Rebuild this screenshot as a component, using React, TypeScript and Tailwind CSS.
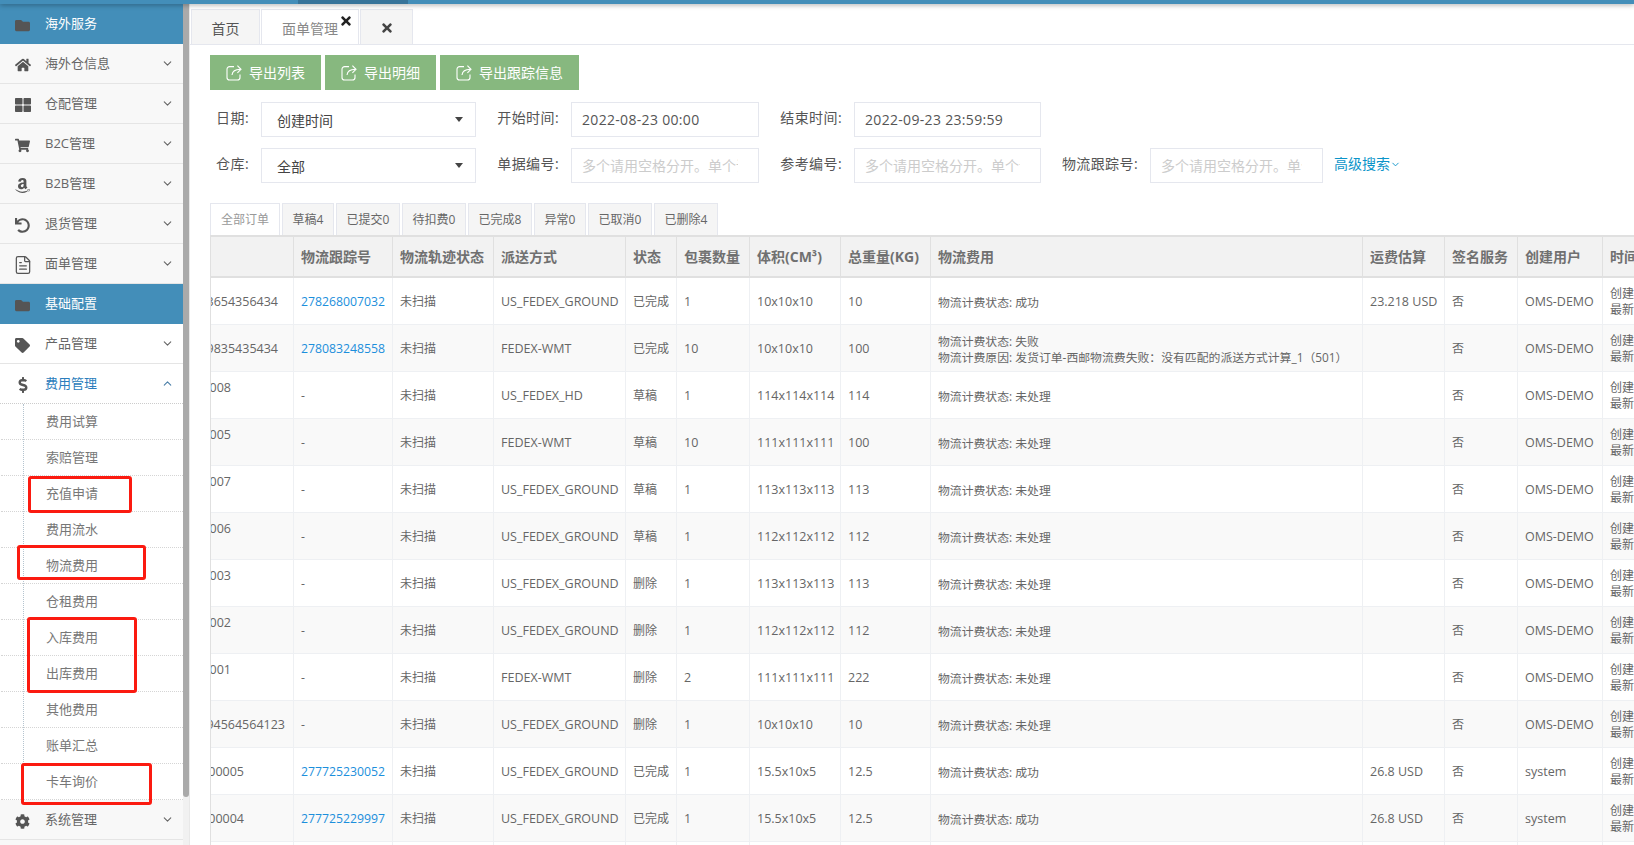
import React from "react";
import {
  FaFolder, FaHome, FaThLarge, FaShoppingCart, FaAmazon, FaUndo, FaTag,
  FaDollarSign, FaCog, FaTimes,
} from "react-icons/fa";
import { ChevronDown, ChevronUp, FileText } from "lucide-react";

const font = "font-['Open_Sans','Noto_Sans_CJK_SC',sans-serif]";

function NavRow({ icon, label, bg = "bg-[#f8f8f8]" }: { icon: React.ReactNode; label: string; bg?: string }) {
  return (
    <div className={`flex h-10 items-center border-b border-[#e5e5e5] text-[13px] text-[#666] ${bg}`}>
      <span className="flex w-[45px] justify-center pt-[3px] text-[#555]">{icon}</span>
      <span className="flex-1">{label}</span>
      <ChevronDown size={13} className="mr-[9px] text-[#666]" />
    </div>
  );
}

function NavHead({ label }: { label: string }) {
  return (
    <div className="flex h-10 items-center bg-[#438eb9] text-[13px] text-white">
      <span className="flex w-[45px] justify-center pt-[3px] text-[#555]"><FaFolder size={15} /></span>
      <span>{label}</span>
    </div>
  );
}

const subItems = ["费用试算", "索赔管理", "充值申请", "费用流水", "物流费用", "仓租费用", "入库费用", "出库费用", "其他费用", "账单汇总", "卡车询价"];

const subTabs = [
  { t: "全部订单", w: "w-[70px]", on: true },
  { t: "草稿4", w: "w-[52px]" },
  { t: "已提交0", w: "w-[64px]" },
  { t: "待扣费0", w: "w-[64px]" },
  { t: "已完成8", w: "w-[64px]" },
  { t: "异常0", w: "w-[52px]" },
  { t: "已取消0", w: "w-[64px]" },
  { t: "已删除4", w: "w-[64px]" },
];

const cols = [
  { t: "", w: "w-[83px]" },
  { t: "物流跟踪号", w: "w-[99px]" },
  { t: "物流轨迹状态", w: "w-[101px]" },
  { t: "派送方式", w: "w-[132px]" },
  { t: "状态", w: "w-[51px]" },
  { t: "包裹数量", w: "w-[73px]" },
  { t: "体积(CM³)", w: "w-[91px]" },
  { t: "总重量(KG)", w: "w-[90px]" },
  { t: "物流费用", w: "w-[432px]" },
  { t: "运费估算", w: "w-[82px]" },
  { t: "签名服务", w: "w-[73px]" },
  { t: "创建用户", w: "w-[85px]" },
  { t: "时间", w: "w-[60px]" },
];

type Row = {
  id: string; idc: string; track: string; ship: string; st: string; n: string; v: string; kg: string;
  fee: string[]; est: string; user: string;
};
const pending = ["物流计费状态: 未处理"];
const ok = ["物流计费状态: 成功"];
const rows: Row[] = [
  { id: "3654356434", idc: "pr-[15px]", track: "278268007032", ship: "US_FEDEX_GROUND", st: "已完成", n: "1", v: "10x10x10", kg: "10", fee: ok, est: "23.218 USD", user: "OMS-DEMO" },
  { id: "9835435434", idc: "pr-[15px]", track: "278083248558", ship: "FEDEX-WMT", st: "已完成", n: "10", v: "10x10x10", kg: "100", fee: ["物流计费状态: 失败", "物流计费原因: 发货订单-西邮物流费失败：没有匹配的派送方式计算_1（501）"], est: "", user: "OMS-DEMO" },
  { id: "008", idc: "pr-[62px] mb-4", track: "-", ship: "US_FEDEX_HD", st: "草稿", n: "1", v: "114x114x114", kg: "114", fee: pending, est: "", user: "OMS-DEMO" },
  { id: "005", idc: "pr-[62px] mb-4", track: "-", ship: "FEDEX-WMT", st: "草稿", n: "10", v: "111x111x111", kg: "100", fee: pending, est: "", user: "OMS-DEMO" },
  { id: "007", idc: "pr-[62px] mb-4", track: "-", ship: "US_FEDEX_GROUND", st: "草稿", n: "1", v: "113x113x113", kg: "113", fee: pending, est: "", user: "OMS-DEMO" },
  { id: "006", idc: "pr-[62px] mb-4", track: "-", ship: "US_FEDEX_GROUND", st: "草稿", n: "1", v: "112x112x112", kg: "112", fee: pending, est: "", user: "OMS-DEMO" },
  { id: "003", idc: "pr-[62px] mb-4", track: "-", ship: "US_FEDEX_GROUND", st: "删除", n: "1", v: "113x113x113", kg: "113", fee: pending, est: "", user: "OMS-DEMO" },
  { id: "002", idc: "pr-[62px] mb-4", track: "-", ship: "US_FEDEX_GROUND", st: "删除", n: "1", v: "112x112x112", kg: "112", fee: pending, est: "", user: "OMS-DEMO" },
  { id: "001", idc: "pr-[62px] mb-4", track: "-", ship: "FEDEX-WMT", st: "删除", n: "2", v: "111x111x111", kg: "222", fee: pending, est: "", user: "OMS-DEMO" },
  { id: "94564564123", idc: "pr-[8px]", track: "-", ship: "US_FEDEX_GROUND", st: "删除", n: "1", v: "10x10x10", kg: "10", fee: pending, est: "", user: "OMS-DEMO" },
  { id: "00005", idc: "pr-[49px]", track: "277725230052", ship: "US_FEDEX_GROUND", st: "已完成", n: "1", v: "15.5x10x5", kg: "12.5", fee: ok, est: "26.8 USD", user: "system" },
  { id: "00004", idc: "pr-[49px]", track: "277725229997", ship: "US_FEDEX_GROUND", st: "已完成", n: "1", v: "15.5x10x5", kg: "12.5", fee: ok, est: "26.8 USD", user: "system" },
];

const td = "border-b border-r border-[#eef0f3] pl-[7px] pr-0 pt-[2px] align-middle whitespace-nowrap overflow-hidden";
const tdA = `${td} text-[12.5px]`;
const tdN = `${td} text-[12.25px]`;

function ShareIcon() {
  return (
    <svg width="16" height="17" viewBox="0 0 16 17" fill="none" stroke="currentColor" strokeWidth="1.1" className="mr-[7px] shrink-0">
      <path d="M8 2.6H3.6A2.6 2.6 0 0 0 1 5.2v8.2A2.6 2.6 0 0 0 3.6 16h7.8A2.6 2.6 0 0 0 14 13.4V10.5" />
      <path d="M6 11c.4-3.6 2.6-5.6 8.2-5.6" />
      <path d="M11.4 1.6 15 5.3l-3.6 3.6" />
    </svg>
  );
}

function Btn({ t, w }: { t: string; w: string }) {
  return (
    <button className={`flex h-[35px] items-center bg-[#87b87f] pl-4 text-sm text-white ${w}`}>
      <ShareIcon />
      {t}
    </button>
  );
}

function Label({ t, w }: { t: string; w: string }) {
  return <label className={`pr-3 pb-[3px] text-right text-sm tracking-[0.4px] whitespace-nowrap text-[#555] ${w}`}>{t}</label>;
}

function Sel({ t }: { t: string }) {
  return (
    <div className="flex h-[35px] w-[215px] items-center justify-between border border-[#e5e7ee] bg-white pr-[12px] pl-[15px] text-sm text-[#444]">
      <span className="pt-[2px]">{t}</span>
      <svg width="8" height="5" viewBox="0 0 8 5"><polygon points="0,0 8,0 4,5" fill="#444" /></svg>
    </div>
  );
}

function Inp({ w, value, ph }: { w: string; value?: string; ph?: string }) {
  return (
    <input
      readOnly
      value={value}
      placeholder={ph}
      className={`h-[35px] border border-[#e5e7ee] bg-white pr-5 pl-[10px] text-sm tracking-[0.32px] text-[#555] outline-none placeholder:tracking-normal placeholder:text-[#ccc] ${w}`}
    />
  );
}

const ph = "多个请用空格分开。单个请";

export default function App() {
  return (
    <div className={`relative flex h-[845px] w-full flex-col overflow-hidden bg-white ${font}`}>
      <div className="relative z-10 flex h-1 shrink-0 shadow-[0_1px_5px_rgba(0,0,0,0.35)]">
        <div className="w-[298px] bg-[#438eb9]" />
        <div className="w-[110px] bg-[#37749a]" />
        <div className="flex-1 bg-[#438eb9]" />
      </div>
      <div className="flex min-h-0 flex-1">
        <aside className="w-[183px] shrink-0 overflow-hidden bg-white">
          <NavHead label="海外服务" />
          <NavRow icon={<FaHome size={16} />} label="海外仓信息" />
          <NavRow icon={<FaThLarge size={16} />} label="仓配管理" />
          <NavRow icon={<FaShoppingCart size={15} />} label="B2C管理" />
          <NavRow icon={<FaAmazon size={17} />} label="B2B管理" />
          <NavRow icon={<FaUndo size={15} />} label="退货管理" />
          <NavRow icon={<FileText size={20} strokeWidth={1.5} />} label="面单管理" />
          <NavHead label="基础配置" />
          <NavRow icon={<FaTag size={15} />} label="产品管理" bg="bg-white" />
          <div className="flex h-10 items-center border-b border-dotted border-[#ccc] bg-white text-[13px] text-[#2b7dbc]">
            <span className="flex w-[45px] justify-center pt-[3px] text-[#555]"><FaDollarSign size={16} /></span>
            <span className="flex-1">费用管理</span>
            <ChevronUp size={13} className="mr-[9px] text-[#4a7fa8]" />
          </div>
          <div className="ml-[23px] border-l border-dotted border-[#b5c4cf]">
            {subItems.map((s) => (
              <div key={s} className="-ml-[23px] flex h-9 items-center border-b border-dotted border-[#d5d5d5] pl-[45px] text-[13px] text-[#777]">{s}</div>
            ))}
          </div>
          <NavRow icon={<FaCog size={15} />} label="系统管理" />
          <div className="h-2 bg-[#f8f8f8]" />
        </aside>
        <div className="flex w-[7px] shrink-0 flex-col border-r border-[#e8e8e8] bg-[#f1f1f1]">
          <div className="h-[793px] w-[6px] rounded-b-[3px] bg-[#aaaaaa]" />
        </div>
        <main className="min-w-0 flex-1 overflow-hidden bg-white">
          <div className="flex h-[41px] gap-[1px] border-b border-[#e5e7ee] pt-[5px] pl-[1px] text-sm">
            <div className="flex h-[35px] w-[69px] items-center justify-center border border-b-0 border-[#e5e7ee] bg-[#f5f5f5] pt-[3px] text-[#555]">首页</div>
            <div className="relative flex h-[35px] w-[98px] items-center border border-b-0 border-[#e5e7ee] bg-white pt-[3px] pl-[20px] text-[#888]">
              面单管理
              <FaTimes size={14} className="absolute top-[4px] left-[77px] text-[#222]" />
            </div>
            <div className="flex h-[35px] w-[53px] items-center justify-center border border-b-0 border-[#e5e7ee] bg-[#f5f5f5] pt-[2px] text-[#444]">
              <FaTimes size={14} />
            </div>
          </div>
          <div className="pt-[10px] pl-5">
            <div className="flex gap-1">
              <Btn t="导出列表" w="w-[111px]" />
              <Btn t="导出明细" w="w-[111px]" />
              <Btn t="导出跟踪信息" w="w-[139px]" />
            </div>
            <div className="mt-3 flex items-center">
              <Label t="日期:" w="w-[51px]" />
              <Sel t="创建时间" />
              <Label t="开始时间:" w="w-[95px]" />
              <Inp w="w-[188px]" value="2022-08-23 00:00" />
              <Label t="结束时间:" w="w-[95px]" />
              <Inp w="w-[187px]" value="2022-09-23 23:59:59" />
            </div>
            <div className="mt-[11px] flex items-center">
              <Label t="仓库:" w="w-[51px]" />
              <Sel t="全部" />
              <Label t="单据编号:" w="w-[95px]" />
              <Inp w="w-[188px]" ph={ph} />
              <Label t="参考编号:" w="w-[95px]" />
              <Inp w="w-[187px]" ph={ph} />
              <Label t="物流跟踪号:" w="w-[109px]" />
              <Inp w="w-[173px]" ph={ph} />
              <span className="ml-[11px] flex items-center pb-[3px] text-sm text-[#0b94c9]">
                高级搜索<ChevronDown size={11} />
              </span>
            </div>
            <div className="mt-5 flex h-8 gap-[2px] text-xs">
              {subTabs.map((s) => (
                <div
                  key={s.t}
                  className={`flex items-center justify-center border border-b-0 border-[#e5e7ee] ${s.w} ${s.on ? "bg-white text-[#999]" : "bg-[#f5f5f5] text-[#666]"}`}
                >
                  {s.t}
                </div>
              ))}
            </div>
            <table className="w-[1453px] table-fixed border-separate border-spacing-0 border-l border-[#e0e0e0] text-xs text-[#666]">
              <thead>
                <tr>
                  {cols.map((c, i) => (
                    <th
                      key={i}
                      className={`h-[43px] border-t-2 border-r border-b-2 border-[#e0e0e0] bg-[#f2f2f2] pl-[7px] text-left text-sm font-bold whitespace-nowrap text-[#707070] ${c.w}`}
                    >
                      {c.t}
                    </th>
                  ))}
                </tr>
              </thead>
              <tbody>
                {rows.map((r, i) => (
                  <tr key={i} className={i % 2 ? "bg-[#f9f9f9]" : "bg-white"}>
                    <td className="h-[47px] overflow-hidden border-r border-b border-[#eef0f3] pt-[2px] align-middle text-[12.5px] whitespace-nowrap">
                      <div className={`flex justify-end overflow-hidden ${r.idc}`}>
                        <span className="shrink-0">{r.id}</span>
                      </div>
                    </td>
                    <td className={`${tdN} ${r.track === "-" ? "" : "text-[#1c8fdc]"}`}>{r.track}</td>
                    <td className={td}>未扫描</td>
                    <td className={tdA}>{r.ship}</td>
                    <td className={td}>{r.st}</td>
                    <td className={tdA}>{r.n}</td>
                    <td className={tdA}>{r.v}</td>
                    <td className={tdA}>{r.kg}</td>
                    <td className={`${td} text-[11.85px] leading-4`}>
                      {r.fee.map((l) => <div key={l}>{l}</div>)}
                    </td>
                    <td className={tdA}>{r.est}</td>
                    <td className={td}>否</td>
                    <td className={tdA}>{r.user}</td>
                    <td className={`${td} leading-4`}>
                      <div>创建</div>
                      <div>最新</div>
                    </td>
                  </tr>
                ))}
                <tr>
                  {cols.map((c, i) => <td key={i} className="h-[47px] border-r border-[#eef0f3]" />)}
                </tr>
              </tbody>
            </table>
          </div>
        </main>
      </div>
      <div className="absolute top-[476px] left-[28px] z-20 h-[37px] w-[104px] rounded-[3px] border-[3px] border-[#fb1a10]" />
      <div className="absolute top-[545px] left-[17px] z-20 h-[35px] w-[129px] rounded-[3px] border-[3px] border-[#fb1a10]" />
      <div className="absolute top-[617px] left-[27px] z-20 h-[76px] w-[110px] rounded-[3px] border-[3px] border-[#fb1a10]" />
      <div className="absolute top-[763px] left-[21px] z-20 h-[42px] w-[131px] rounded-[3px] border-[3px] border-[#fb1a10]" />
    </div>
  );
}
